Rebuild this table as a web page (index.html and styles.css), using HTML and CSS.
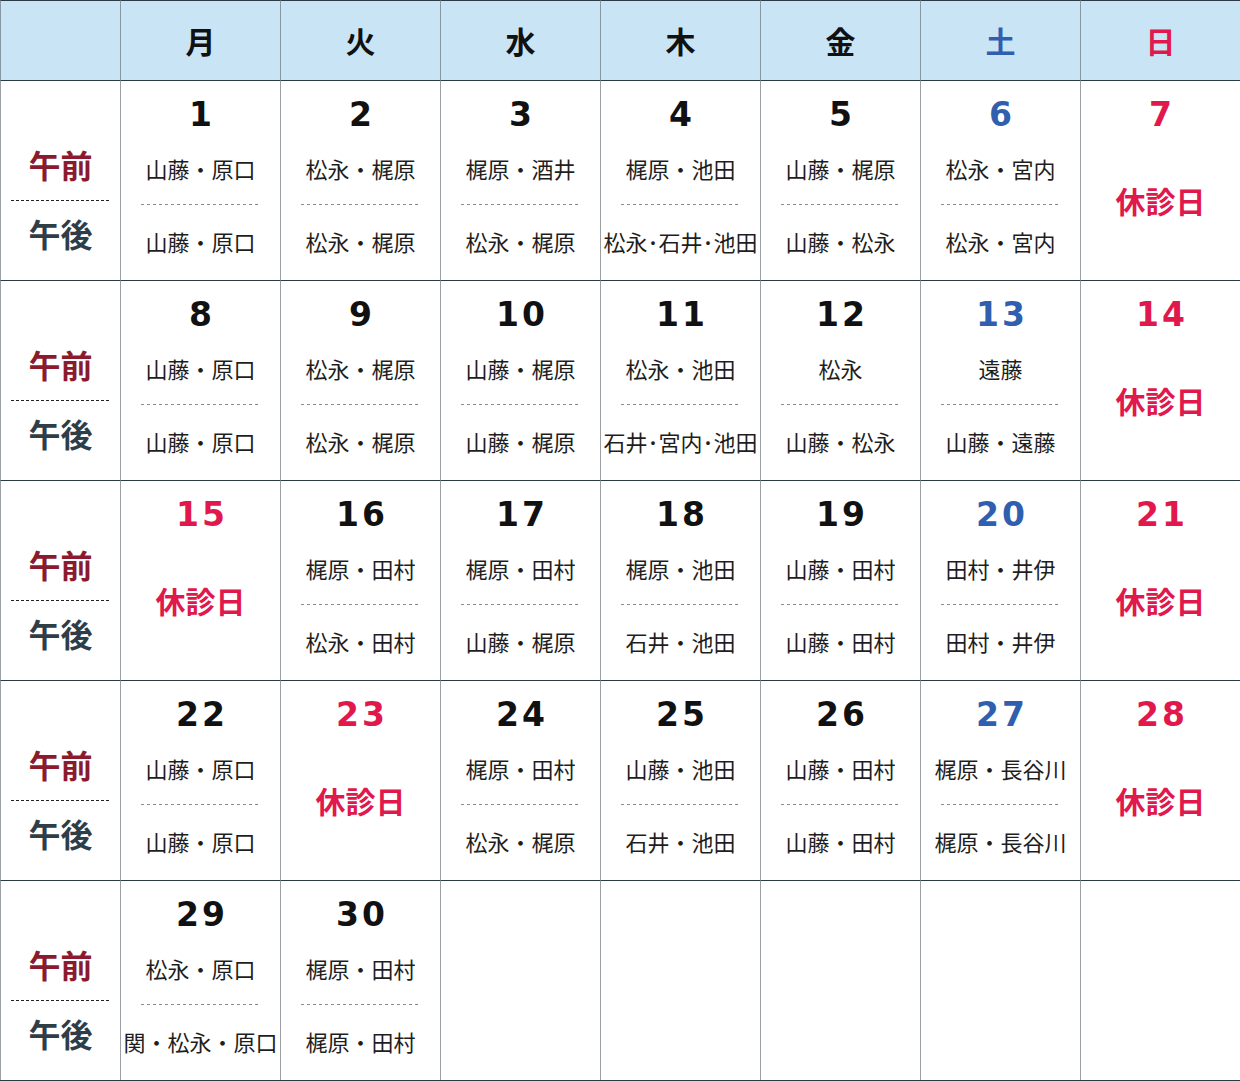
FILE: index.html
```html
<!DOCTYPE html>
<html lang="ja">
<head>
<meta charset="utf-8">
<link rel="stylesheet" href="styles.css">
</head>
<body>
<div class="cal">
  <div class="hd"></div>
  <div class="hd">月</div>
  <div class="hd">火</div>
  <div class="hd">水</div>
  <div class="hd">木</div>
  <div class="hd">金</div>
  <div class="hd sat">土</div>
  <div class="hd sun">日</div>

  <div class="side"><div class="am">午前</div><div class="sdash"></div><div class="pm">午後</div></div>
  <div class="day"><div class="num">1</div><div class="nm">山藤・原口</div><div class="dash"></div><div class="nm pmn">山藤・原口</div></div>
  <div class="day"><div class="num">2</div><div class="nm">松永・梶原</div><div class="dash"></div><div class="nm pmn">松永・梶原</div></div>
  <div class="day"><div class="num">3</div><div class="nm">梶原・酒井</div><div class="dash"></div><div class="nm pmn">松永・梶原</div></div>
  <div class="day"><div class="num">4</div><div class="nm">梶原・池田</div><div class="dash"></div><div class="nm pmn">松永･石井･池田</div></div>
  <div class="day"><div class="num">5</div><div class="nm">山藤・梶原</div><div class="dash"></div><div class="nm pmn">山藤・松永</div></div>
  <div class="day"><div class="num blue">6</div><div class="nm">松永・宮内</div><div class="dash"></div><div class="nm pmn">松永・宮内</div></div>
  <div class="day"><div class="num red">7</div><div class="off">休診日</div></div>

  <div class="side"><div class="am">午前</div><div class="sdash"></div><div class="pm">午後</div></div>
  <div class="day"><div class="num">8</div><div class="nm">山藤・原口</div><div class="dash"></div><div class="nm pmn">山藤・原口</div></div>
  <div class="day"><div class="num">9</div><div class="nm">松永・梶原</div><div class="dash"></div><div class="nm pmn">松永・梶原</div></div>
  <div class="day"><div class="num">10</div><div class="nm">山藤・梶原</div><div class="dash"></div><div class="nm pmn">山藤・梶原</div></div>
  <div class="day"><div class="num">11</div><div class="nm">松永・池田</div><div class="dash"></div><div class="nm pmn">石井･宮内･池田</div></div>
  <div class="day"><div class="num">12</div><div class="nm">松永</div><div class="dash"></div><div class="nm pmn">山藤・松永</div></div>
  <div class="day"><div class="num blue">13</div><div class="nm">遠藤</div><div class="dash"></div><div class="nm pmn">山藤・遠藤</div></div>
  <div class="day"><div class="num red">14</div><div class="off">休診日</div></div>

  <div class="side"><div class="am">午前</div><div class="sdash"></div><div class="pm">午後</div></div>
  <div class="day"><div class="num red">15</div><div class="off">休診日</div></div>
  <div class="day"><div class="num">16</div><div class="nm">梶原・田村</div><div class="dash"></div><div class="nm pmn">松永・田村</div></div>
  <div class="day"><div class="num">17</div><div class="nm">梶原・田村</div><div class="dash"></div><div class="nm pmn">山藤・梶原</div></div>
  <div class="day"><div class="num">18</div><div class="nm">梶原・池田</div><div class="dash"></div><div class="nm pmn">石井・池田</div></div>
  <div class="day"><div class="num">19</div><div class="nm">山藤・田村</div><div class="dash"></div><div class="nm pmn">山藤・田村</div></div>
  <div class="day"><div class="num blue">20</div><div class="nm">田村・井伊</div><div class="dash"></div><div class="nm pmn">田村・井伊</div></div>
  <div class="day"><div class="num red">21</div><div class="off">休診日</div></div>

  <div class="side"><div class="am">午前</div><div class="sdash"></div><div class="pm">午後</div></div>
  <div class="day"><div class="num">22</div><div class="nm">山藤・原口</div><div class="dash"></div><div class="nm pmn">山藤・原口</div></div>
  <div class="day"><div class="num red">23</div><div class="off">休診日</div></div>
  <div class="day"><div class="num">24</div><div class="nm">梶原・田村</div><div class="dash"></div><div class="nm pmn">松永・梶原</div></div>
  <div class="day"><div class="num">25</div><div class="nm">山藤・池田</div><div class="dash"></div><div class="nm pmn">石井・池田</div></div>
  <div class="day"><div class="num">26</div><div class="nm">山藤・田村</div><div class="dash"></div><div class="nm pmn">山藤・田村</div></div>
  <div class="day"><div class="num blue">27</div><div class="nm">梶原・長谷川</div><div class="dash"></div><div class="nm pmn">梶原・長谷川</div></div>
  <div class="day"><div class="num red">28</div><div class="off">休診日</div></div>

  <div class="side"><div class="am">午前</div><div class="sdash"></div><div class="pm">午後</div></div>
  <div class="day"><div class="num">29</div><div class="nm">松永・原口</div><div class="dash"></div><div class="nm pmn">関・松永・原口</div></div>
  <div class="day"><div class="num">30</div><div class="nm">梶原・田村</div><div class="dash"></div><div class="nm pmn">梶原・田村</div></div>
  <div class="day"></div>
  <div class="day"></div>
  <div class="day"></div>
  <div class="day"></div>
  <div class="day"></div>
</div>
</body>
</html>
```

FILE: styles.css
```css
* { box-sizing: border-box; }
html, body { margin: 0; padding: 0; background: #fff; }
body { font-family: "Noto Sans CJK JP", "Noto Sans", sans-serif; }

.cal {
  display: grid;
  grid-template-columns: 120px repeat(7, 160px);
  grid-template-rows: 80px repeat(5, 200px);
  width: 1240px;
  border-bottom: 1px solid #2c3a44;
}

.hd {
  background: #c9e4f5;
  border-top: 1px solid #2c3a44;
  border-left: 1px solid #8797a3;
  display: flex;
  align-items: center;
  justify-content: center;
  font-size: 30px;
  font-weight: 700;
  color: #111;
  padding-bottom: 1px;
}
.hd.sat { color: #2f5fae; }
.hd.sun { color: #e0184b; }

.side, .day {
  border-top: 1px solid #2c3a44;
  border-left: 1px solid #9aa0a4;
  display: flex;
  flex-direction: column;
  align-items: center;
  overflow: visible;
}

.side { padding-top: 63px; }
.am, .pm {
  font-size: 32px;
  font-weight: 700;
  line-height: 40px;
  height: 40px;
}
.am { color: #8a1b2f; }
.pm { color: #2f3d47; margin-top: 12px; }
.sdash {
  width: 100px;
  height: 1px;
  margin-top: 16px;
  background: repeating-linear-gradient(90deg, #222 0 3px, transparent 3px 5px);
}

.num {
  margin-top: 14px;
  height: 40px;
  line-height: 40px;
  font-family: "DejaVu Sans", Verdana, sans-serif;
  font-weight: 700;
  font-size: 33px;
  letter-spacing: 3px;
  padding-left: 3px;
  color: #111;
}
.num.blue { color: #2f5fae; }
.num.red { color: #e0184b; }

.nm {
  margin-top: 18px;
  height: 30px;
  line-height: 30px;
  font-size: 22px;
  color: #1e1e1e;
  white-space: nowrap;
}
.nm.pmn { margin-top: 21px; }

.dash {
  width: 120px;
  height: 1px;
  margin-top: 21px;
  background: repeating-linear-gradient(90deg, #8c8c8c 0 3px, transparent 3px 6px);
}

.off {
  margin-top: 45px;
  height: 40px;
  line-height: 40px;
  font-size: 30px;
  font-weight: 700;
  color: #e0184b;
}
```
